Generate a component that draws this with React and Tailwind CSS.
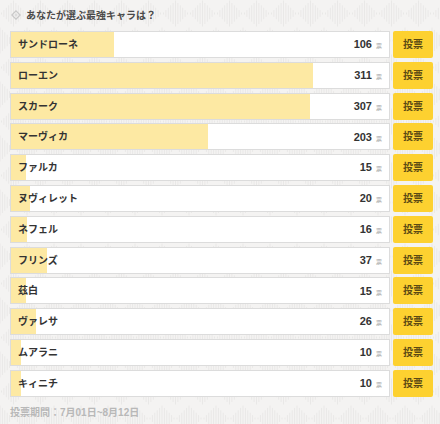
import React from "react";

const rows = [
  { name: "サンドローネ", votes: 106 },
  { name: "ローエン", votes: 311 },
  { name: "スカーク", votes: 307 },
  { name: "マーヴィカ", votes: 203 },
  { name: "ファルカ", votes: 15 },
  { name: "ヌヴィレット", votes: 20 },
  { name: "ネフェル", votes: 16 },
  { name: "フリンズ", votes: 37 },
  { name: "茲白", votes: 15 },
  { name: "ヴァレサ", votes: 26 },
  { name: "ムアラニ", votes: 10 },
  { name: "キィニチ", votes: 10 },
];

const max = Math.max(...rows.map((r) => r.votes));

function Backdrop() {
  return (
    <svg className="absolute inset-0 h-full w-full" aria-hidden="true">
      <defs>
        <pattern id="stripes" width="27" height="54" patternUnits="userSpaceOnUse">
          {[0, 27].map((oy, k) => {
            const cx = k ? 0 : 13.5;
            const lines = [];
            for (let i = -5; i <= 5; i++) {
              const x = cx + i * 2.4;
              const h = 13 - Math.abs(i) * 2.4;
              lines.push(<line key={`${k}-${i}`} x1={x} x2={x} y1={oy + 13.5 - h} y2={oy + 13.5 + h} stroke="#e9e8e7" strokeWidth="1" />);
              if (k) {
                const x2 = 27 + i * 2.4;
                lines.push(<line key={`r-${i}`} x1={x2} x2={x2} y1={oy + 13.5 - h} y2={oy + 13.5 + h} stroke="#e9e8e7" strokeWidth="1" />);
              }
            }
            return lines;
          })}
        </pattern>
      </defs>
      <rect width="100%" height="100%" fill="url(#stripes)" />
    </svg>
  );
}

export default function App() {
  return (
    <div
      className="relative h-[424px] w-[440px] overflow-hidden bg-[#f4f3f2]"
      style={{ fontFamily: '"Liberation Sans", "Noto Sans CJK JP", sans-serif' }}
    >
      <Backdrop />
      <div className="relative flex flex-col pl-[10px] pr-[7px]">
        <div className="flex h-[29px] items-center gap-[5px] pl-[1px] pt-[1px]">
          <svg width="10" height="10" viewBox="0 0 10 10">
            <path d="M5 0.8 L9.2 5 L5 9.2 L0.8 5 Z" fill="none" stroke="#c8c8c8" strokeWidth="1.2" />
            <path d="M5 3.2 L6.8 5 L5 6.8 L3.2 5 Z" fill="#dcdcdc" />
          </svg>
          <span className="text-[10px] font-bold text-[#4a4a4a]">あなたが選ぶ最強キャラは？</span>
        </div>

        <div className="mt-[2px] flex flex-col gap-[3.8px]">
          {rows.map((r) => (
            <div key={r.name} className="flex h-[27px] gap-[3px]">
              <div className="relative flex flex-1 items-center border border-[#dcdcdc] bg-white">
                <div
                  className="absolute inset-y-0 left-0 bg-[#fde9a3]"
                  style={{ width: `${(r.votes / max) * 80}%` }}
                />
                <span className="relative pl-[7px] text-[10px] font-bold text-[#333]">{r.name}</span>
                <span className="relative ml-auto flex items-baseline gap-[4px] pr-[7px]">
                  <span className="text-[11px] font-bold text-[#333]">{r.votes}</span>
                  <span className="text-[6px] text-[#aaa]">票</span>
                </span>
              </div>
              <button className="flex w-[40px] items-center justify-center rounded-[2px] bg-[#fdd130] text-[10px] font-bold text-[#5c4a14]">
                投票
              </button>
            </div>
          ))}
        </div>

        <div className="mt-[8px] text-[10px] font-bold text-[#b8b8b8]">投票期間：7月01日~8月12日</div>
      </div>
    </div>
  );
}
